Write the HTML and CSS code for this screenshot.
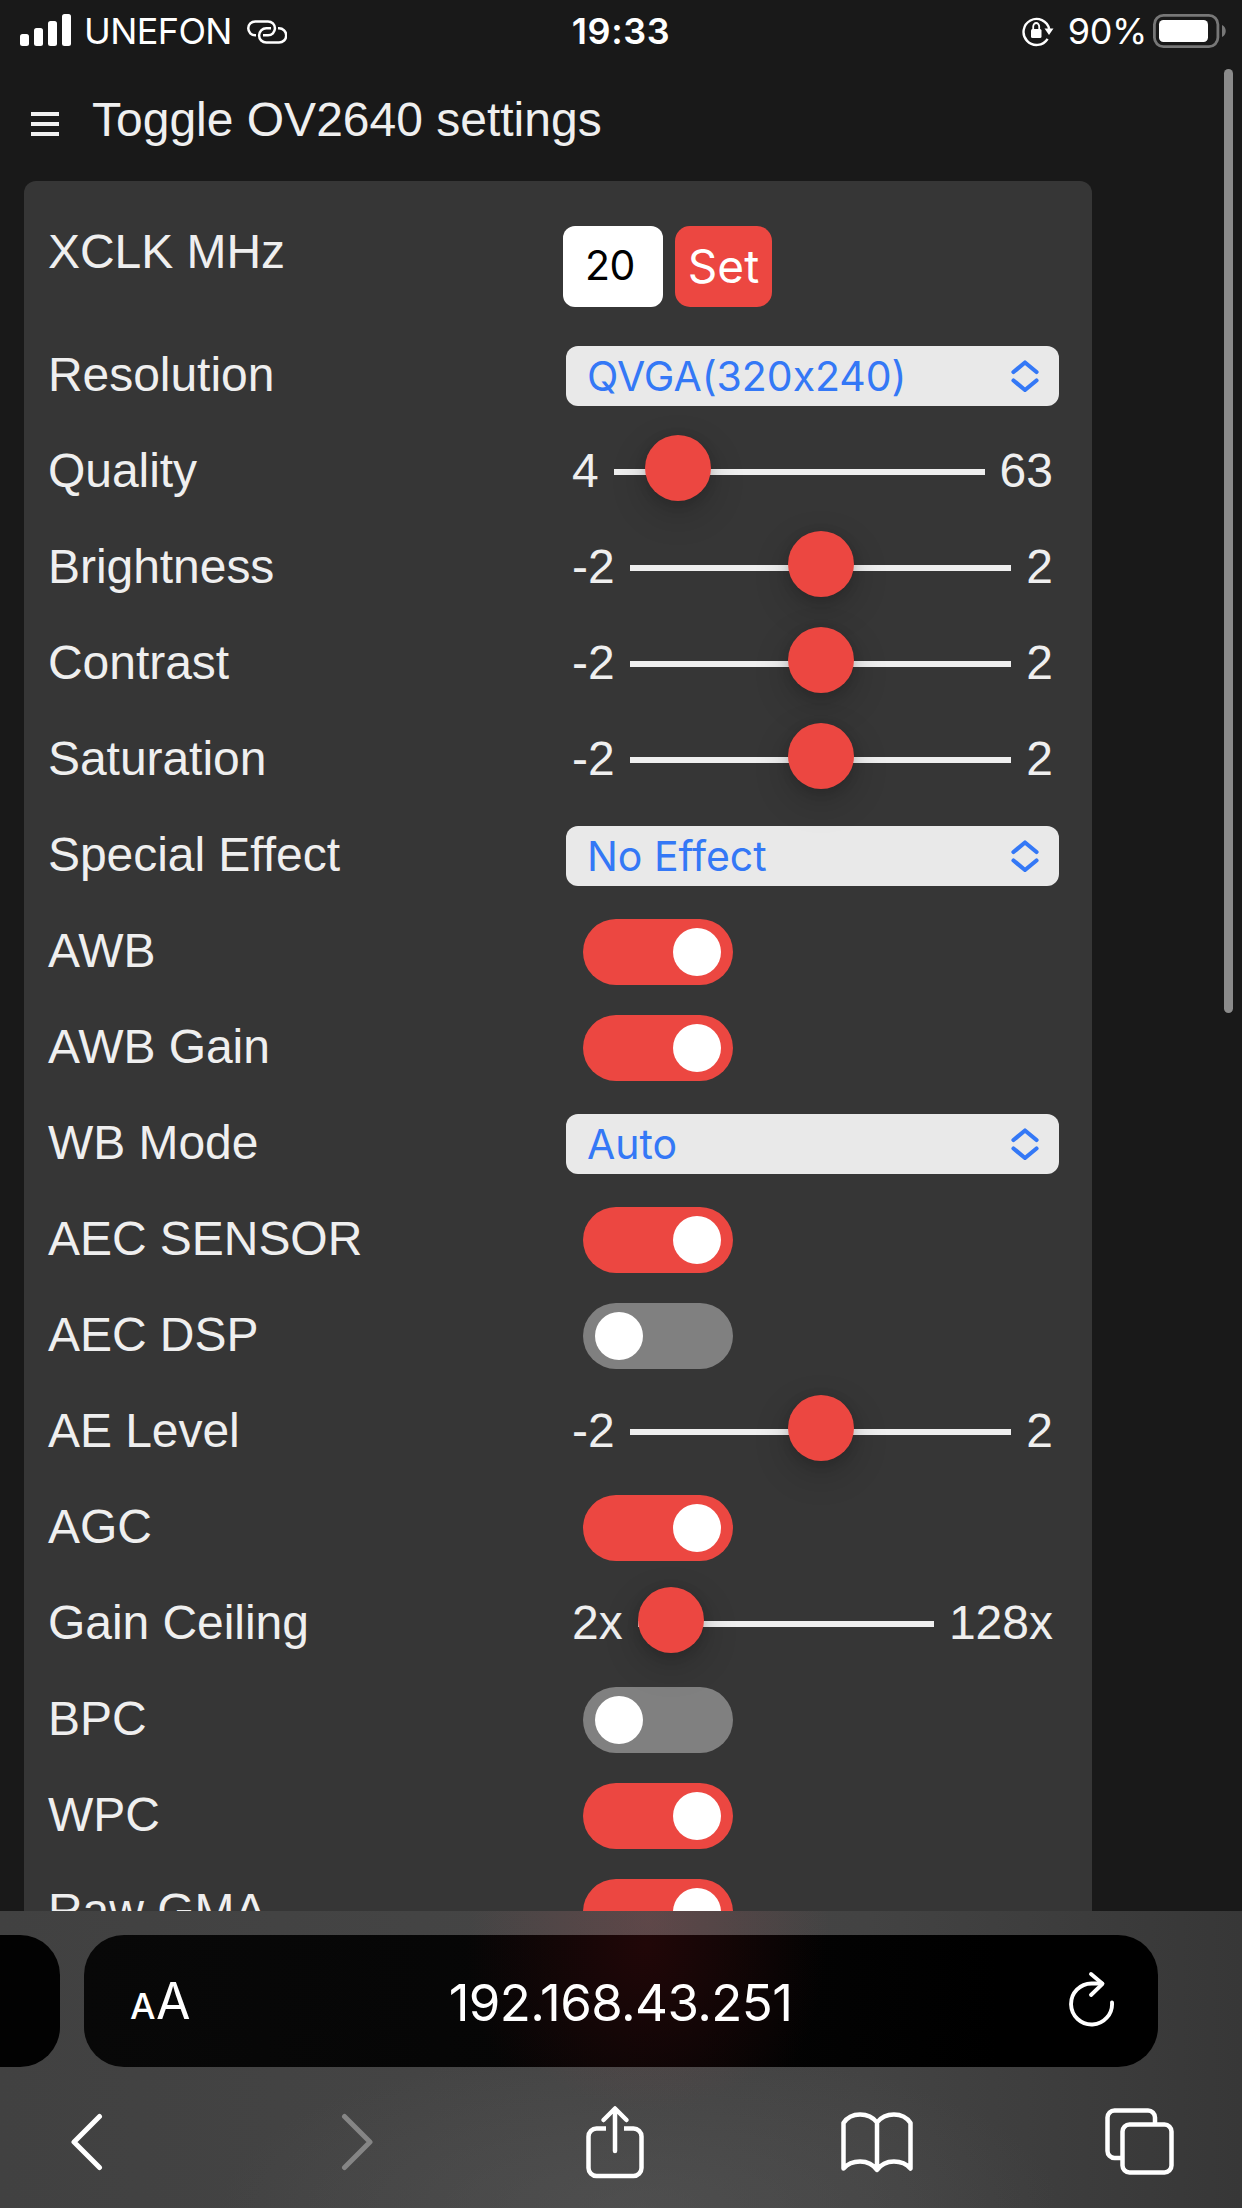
FILE: index.html
```html
<!DOCTYPE html>
<html lang="en">
<head>
<meta charset="utf-8">
<title>Camera settings</title>
<link rel="stylesheet" href="styles.css">
</head>
<body>
<div class="screen">
  <header class="status">
    <div class="status-left">
      <svg class="signal" width="52" height="34" viewBox="0 0 52 34" fill="#fff"><rect x="0" y="20" width="9" height="12" rx="2.5"/><rect x="14" y="14" width="9" height="18" rx="2.5"/><rect x="28" y="7" width="9" height="25" rx="2.5"/><rect x="42" y="0" width="9" height="32" rx="2.5"/></svg>
      <span class="carrier">UNEFON</span>
      <svg class="hotspot" width="40" height="24" viewBox="0 0 40 24" fill="none" stroke="#fff" stroke-width="2.5"><path d="M9 15.300H8.200A6.950 6.950 0 0 1 8.200 1.400H21A6.950 6.950 0 0 1 21 15.300H16"/><path d="M31 8.200H32A7.200 7.200 0 0 1 32 22.600H19.300A7.200 7.200 0 0 1 19.300 8.200H24"/></svg>
    </div>
    <span class="clock">19:33</span>
    <div class="status-right">
      <svg width="32" height="32" viewBox="0 0 32 32" fill="none" stroke="#fff" stroke-width="2.4"><path d="M25.600 23.800A13 13 0 1 1 27.200 14"/><path d="M22.500 13.500h9l-4.500 6.500z" fill="#fff" stroke="none"/><rect x="9" y="14" width="10.500" height="9" rx="1.500" fill="#fff" stroke="none"/><path d="M11.200 15v-3.500a3 3.500 0 0 1 6 0V15" stroke-width="1.800"/></svg>
      <span class="percent">90%</span>
      <svg class="battery" width="74" height="34" viewBox="0 0 74 34"><rect x="1.400" y="1.400" width="63.500" height="31.200" rx="9" fill="none" stroke="#777" stroke-width="2.800"/><rect x="6" y="6" width="49" height="22" rx="4.500" fill="#fff"/><path d="M69 11c5 2 5 10 0 12z" fill="#777"/></svg>
    </div>
  </header>

  <main class="page">
    <div class="title">
      <svg width="28" height="26" viewBox="0 0 28 26" fill="#efefef"><rect width="28" height="4"/><rect y="10" width="28" height="4"/><rect y="20" width="28" height="4"/></svg>
      <span>Toggle OV2640 settings</span>
    </div>
    <section class="panel">
      <div class="row row-first"><span class="label">XCLK MHz</span><div class="clock-set"><span class="number">20</span><span class="set">Set</span></div></div>
      <div class="row"><span class="label">Resolution</span><div class="select"><span>QVGA(320x240)</span><svg width="28" height="32" viewBox="0 0 28 32"><path d="M2.500 12 14 2.500 25.500 12M2.500 20.500 14 30l11.500-9.500"/></svg></div></div>
      <div class="row"><span class="label">Quality</span><div class="range"><span>4</span><i class="track"><b class="thumb" style="left:31px"></b></i><span>63</span></div></div>
      <div class="row"><span class="label">Brightness</span><div class="range"><span>-2</span><i class="track"><b class="thumb" style="left:158px"></b></i><span>2</span></div></div>
      <div class="row"><span class="label">Contrast</span><div class="range"><span>-2</span><i class="track"><b class="thumb" style="left:158px"></b></i><span>2</span></div></div>
      <div class="row"><span class="label">Saturation</span><div class="range"><span>-2</span><i class="track"><b class="thumb" style="left:158px"></b></i><span>2</span></div></div>
      <div class="row"><span class="label">Special Effect</span><div class="select"><span>No Effect</span><svg width="28" height="32" viewBox="0 0 28 32"><path d="M2.500 12 14 2.500 25.500 12M2.500 20.500 14 30l11.500-9.500"/></svg></div></div>
      <div class="row"><span class="label">AWB</span><div class="switch on"><i></i></div></div>
      <div class="row"><span class="label">AWB Gain</span><div class="switch on"><i></i></div></div>
      <div class="row"><span class="label">WB Mode</span><div class="select"><span>Auto</span><svg width="28" height="32" viewBox="0 0 28 32"><path d="M2.500 12 14 2.500 25.500 12M2.500 20.500 14 30l11.500-9.500"/></svg></div></div>
      <div class="row"><span class="label">AEC SENSOR</span><div class="switch on"><i></i></div></div>
      <div class="row"><span class="label">AEC DSP</span><div class="switch"><i></i></div></div>
      <div class="row"><span class="label">AE Level</span><div class="range"><span>-2</span><i class="track"><b class="thumb" style="left:158px"></b></i><span>2</span></div></div>
      <div class="row"><span class="label">AGC</span><div class="switch on"><i></i></div></div>
      <div class="row"><span class="label">Gain Ceiling</span><div class="range"><span>2x</span><i class="track"><b class="thumb" style="left:0px"></b></i><span>128x</span></div></div>
      <div class="row"><span class="label">BPC</span><div class="switch"><i></i></div></div>
      <div class="row"><span class="label">WPC</span><div class="switch on"><i></i></div></div>
      <div class="row"><span class="label">Raw GMA</span><div class="switch on"><i></i></div></div>
    </section>
    <div class="scrollbar"></div>
  </main>

  <footer class="browser">
    <div class="tabs">
      <div class="tab-prev"></div>
      <div class="address">
        <span class="reader"><small>A</small>A</span>
        <span class="url">192.168.43.251</span>
        <svg class="reload" width="46" height="56" viewBox="0 0 46 56" fill="none" stroke="#fff" stroke-width="3.900" stroke-linecap="round" stroke-linejoin="round"><path d="M43 31.500A20.500 20.500 0 1 1 22.500 12.500H33"/><path d="M22 3 33.500 12.800 22 24"/></svg>
      </div>
    </div>
    <nav class="tools">
      <svg width="34" height="58" viewBox="0 0 34 58" class="back"><path d="M29.500 3.500 4 29 29.500 54.500" stroke-width="5"/></svg>
      <svg width="34" height="58" viewBox="0 0 34 58" class="forward"><path d="M4.500 3.500 30 29 4.500 54.500" stroke-width="5"/></svg>
      <svg width="58" height="74" viewBox="0 0 58 74" class="share"><path d="M20 23.500H10.500a8 8 0 0 0-8 8V63a8 8 0 0 0 8 8h37a8 8 0 0 0 8-8V31.500a8 8 0 0 0-8-8H38" stroke-linecap="butt"/><path d="M29 46V4M17.500 15 29 3.500 40.500 15"/></svg>
      <svg width="72" height="62" viewBox="0 0 72 62" class="book"><path d="M36 11.500C28 1 10 .500 2.500 12V57.500C10 48.500 28 47 36 59 44 47 62 48.500 69.500 57.500V12C62 .500 44 1 36 11.500zM36 11.500V58"/></svg>
      <svg width="70" height="68" viewBox="0 0 70 68" class="pages"><path d="M17 50H9.500a7 7 0 0 1-7-7V9.500a7 7 0 0 1 7-7H43a7 7 0 0 1 7 7V16" stroke-linecap="butt"/><rect x="17.500" y="16.500" width="49" height="48" rx="7"/></svg>
    </nav>
  </footer>
</div>
</body>
</html>
```
FILE: styles.css
```css
* { box-sizing: border-box; }
body { margin: 0; background: #191919; }
svg { display: block; flex: none; }

.screen {
  width: 1242px;
  height: 2208px;
  display: flex;
  flex-direction: column;
  overflow: hidden;
  background: #191919;
  color: #efefef;
  font: 48px/56px "Liberation Sans", Arial, sans-serif;
}

/* status bar */
.status {
  height: 62px;
  flex: none;
  display: grid;
  grid-template-columns: 1fr auto 1fr;
  align-items: center;
  padding: 0 15px 0 20px;
  color: #fff;
  font: 36px/62px Inter, sans-serif;
}
.status-left, .status-right { display: flex; align-items: center; }
.status-right { justify-content: flex-end; }
.carrier { margin-left: 12px; letter-spacing: -.6px; }
.hotspot { margin-left: 15px; margin-top: 2px; }
.clock { font-weight: 600; letter-spacing: .6px; margin-left: -5px; }
.percent { margin: 0 6px 0 14px; letter-spacing: -.4px; }

/* page */
.page { height: 1849px; flex: none; overflow: hidden; position: relative; }
.title {
  height: 119px;
  display: flex;
  align-items: center;
  gap: 33px;
  padding: 0 0 2px 31px;
}
.title svg { margin-top: 9px; }
.title span { margin-top: -2px; }
.panel {
  width: 1068px;
  margin-left: 24px;
  border-radius: 12px;
  background: #363636;
  padding-left: 24px;
}
.row {
  height: 96px;
  display: grid;
  grid-template-columns: 518px 1fr;
  align-items: center;
}
.label { margin-top: -3px; letter-spacing: -.05px; }
.row-first { height: 147px; }
.row-first .label { margin-top: -6px; }
.clock-set { display: flex; gap: 12px; margin: 45px 0 0 -3px; align-self: start; }
.number, .set { height: 81px; font-family: Inter, sans-serif; }
.number {
  width: 100px;
  padding: 0 0 4px 22px;
  line-height: 78px;
  font-size: 41px;
  letter-spacing: -.4px;
  border-radius: 12px;
  background: #fff;
  color: #000;
}
.set {
  width: 97px;
  font-size: 46px;
  line-height: 81px;
  text-align: center;
  border-radius: 15px;
  background: #ec4741;
  color: #fff;
}
.select {
  width: 493px;
  height: 60px;
  display: flex;
  align-items: center;
  justify-content: space-between;
  padding: 0 20px 0 21px;
  border-radius: 12px;
  background: #e9e9e9;
  color: #3478f6;
  font: 41px/60px Inter, sans-serif;
  font-feature-settings: "calt" 0;
  letter-spacing: -.04px;
}
.select path {
  fill: none;
  stroke: #3478f6;
  stroke-width: 4.2;
  stroke-linecap: round;
  stroke-linejoin: round;
}
.range { width: 481px; margin-left: 6px; display: flex; align-items: center; gap: 15px; }
.range span { margin-top: -3px; }
.track { flex: 1; height: 6px; background: #efefef; position: relative; }
.thumb {
  position: absolute;
  top: -34px;
  width: 66px;
  height: 66px;
  border-radius: 50%;
  background: #ec4741;
  box-shadow: 0 12px 36px rgba(0, 0, 0, .2), 0 2px 12px rgba(0, 0, 0, .14);
}
.switch {
  width: 150px;
  height: 66px;
  margin-left: 17px;
  padding: 9px 12px;
  border-radius: 33px;
  background: #808080;
  display: flex;
}
.switch i { width: 48px; height: 48px; border-radius: 50%; background: #fff; }
.on { background: #ec4741; justify-content: flex-end; }
.scrollbar {
  position: absolute;
  right: 9px;
  top: 7px;
  width: 9px;
  height: 944px;
  border-radius: 5px;
  background: #8b8b8b;
}

/* browser chrome */
.browser {
  flex: 1;
  padding-top: 24px;
  background:
    radial-gradient(ellipse 180px 190px at 650px 10px, rgba(130, 75, 78, .42), transparent),
    radial-gradient(ellipse 420px 160px at 640px 297px, rgba(90, 90, 90, .45), transparent),
    linear-gradient(90deg, #414141 0, #454545 45%, #434343 70%, #373737 100%);
}
.tabs { display: flex; gap: 24px; height: 132px; }
.tab-prev { width: 60px; border-radius: 0 40px 40px 0; background: #020202; }
.address {
  width: 1074px;
  display: grid;
  grid-template-columns: 1fr auto 1fr;
  align-items: center;
  padding: 0 43px 0 46px;
  border-radius: 40px;
  background:
    radial-gradient(ellipse 180px 210px at 562px 10px, #210708, transparent),
    linear-gradient(90deg, #080808, #050505 50%, #000 85%);
  color: #fff;
  font-family: Inter, sans-serif;
}
.reader { font-size: 50px; letter-spacing: -1.5px; padding-top: 4px; }
.reader small { font-size: 36px; font-weight: 500; margin-right: 2px; }
.url { font-size: 51px; letter-spacing: -.6px; padding-top: 4px; margin-left: -4px; }
.reload { justify-self: end; margin-top: -4px; }
.tools {
  display: grid;
  grid-template-columns: 270px 246px 255px 264px 68px;
  align-items: center;
  padding: 0 0 0 70px;
  height: 149px;
}
.tools svg { fill: none; stroke: #fff; stroke-width: 4.5; stroke-linecap: round; stroke-linejoin: round; }
.tools .forward { stroke: #858585; }
```
